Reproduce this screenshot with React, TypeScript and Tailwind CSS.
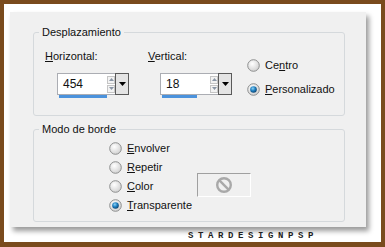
import React from "react"

const font = { fontFamily: '"Liberation Sans", Arial, sans-serif' }

function Radio({ checked, label, u }: { checked?: boolean; label: string; u: number }) {
  return (
    <div className="flex items-center h-[16px] gap-[5px]">
      <svg width="13" height="13" viewBox="0 0 13 13" className="shrink-0">
        <defs>
          <radialGradient id={checked ? "rgOn" : "rgOff"} cx="0.4" cy="0.35" r="0.7">
            <stop offset="0" stopColor="#ffffff" />
            <stop offset="1" stopColor="#cfcfcf" />
          </radialGradient>
          <radialGradient id="dot" cx="0.4" cy="0.35" r="0.7">
            <stop offset="0" stopColor="#8fd3f5" />
            <stop offset="0.5" stopColor="#1d7fc1" />
            <stop offset="1" stopColor="#0c3d66" />
          </radialGradient>
        </defs>
        <circle cx="6.5" cy="6.5" r="5.8" fill={checked ? "url(#rgOn)" : "url(#rgOff)"} stroke="#8e8f8f" strokeWidth="1" />
        {checked && <circle cx="6.5" cy="6.5" r="3.3" fill="url(#dot)" />}
      </svg>
      <span className="text-[11px] leading-[13px] text-[#111]">
        {label.slice(0, u)}
        <span className="underline underline-offset-[1px]">{label[u]}</span>
        {label.slice(u + 1)}
      </span>
    </div>
  )
}

function Spinner({ value, bar }: { value: string; bar: number }) {
  return (
    <div className="flex flex-col w-[72px]">
      <div className="flex h-[22px]">
        <div className="flex items-center w-[50px] bg-white border border-[#abadb3] border-r-0 pl-[5px] text-[12px] text-[#111]">
          {value}
        </div>
        <div className="flex flex-col justify-center gap-[1px] w-[8px] bg-white border-y border-[#abadb3]">
          <div className="flex items-center justify-center h-[8px] bg-[#f3f3f3] border border-[#c5c5c5]">
            <svg width="5" height="3" viewBox="0 0 5 3"><path d="M0 3 L2.5 0 L5 3 Z" fill="#8a96a6" /></svg>
          </div>
          <div className="flex items-center justify-center h-[8px] bg-[#f3f3f3] border border-[#c5c5c5]">
            <svg width="5" height="3" viewBox="0 0 5 3"><path d="M0 0 L2.5 3 L5 0 Z" fill="#8a96a6" /></svg>
          </div>
        </div>
        <div className="flex items-center justify-center w-[14px] bg-[#e4e4e4] border border-[#5a5a5a]">
          <svg width="7" height="4" viewBox="0 0 7 4"><path d="M0 0 L3.5 4 L7 0 Z" fill="#000" /></svg>
        </div>
      </div>
      <div className="h-[3px] w-[50px] pl-[2px]">
        <div className="h-[3px] bg-[#4b92dc]" style={{ width: bar }} />
      </div>
    </div>
  )
}

export default function App() {
  return (
    <div className="w-[385px] h-[247px] bg-[#7a4b1d] pt-[4px] px-[4px] pb-[5px]" style={font}>
      <div className="h-full bg-white pt-[8px] pl-[6px]">
        <div className="w-[356px] h-[215px] bg-[#f0f0f0] pl-[23px] pt-[13px] shadow-[3px_4px_5px_rgba(0,0,0,0.4)]">
          {/* Desplazamiento */}
          <fieldset className="w-[312px] h-[91px] border border-[#d5d9dc] rounded-[3px]">
            <legend className="ml-[5px] px-[3px] text-[11px] leading-[14px] text-[#111]">Desplazamiento</legend>
            <div className="flex pl-[11px] pt-[11px]">
              <div className="flex flex-col w-[103px]">
                <span className="text-[11px] leading-[13px] text-[#111]">
                  <span className="underline underline-offset-[1px]">H</span>orizontal:
                </span>
                <div className="ml-[12px] mt-[10px]">
                  <Spinner value="454" bar={48} />
                </div>
              </div>
              <div className="flex flex-col w-[99px]">
                <span className="text-[11px] leading-[13px] text-[#111]">
                  <span className="underline underline-offset-[1px]">V</span>ertical:
                </span>
                <div className="ml-[12px] mt-[10px]">
                  <Spinner value="18" bar={35} />
                </div>
              </div>
              <div className="flex flex-col gap-[8px] mt-[7px]">
                <Radio label="Centro" u={2} />
                <Radio label="Personalizado" u={0} checked />
              </div>
            </div>
          </fieldset>

          {/* Modo de borde */}
          <fieldset className="mt-[6px] w-[312px] h-[100px] border border-[#d5d9dc] rounded-[3px]">
            <legend className="ml-[5px] px-[3px] text-[11px] leading-[14px] text-[#111]">Modo de borde</legend>
            <div className="flex pl-[75px] pt-[4px]">
              <div className="flex flex-col gap-[3px] w-[88px]">
                <Radio label="Envolver" u={0} />
                <Radio label="Repetir" u={0} />
                <Radio label="Color" u={0} />
                <Radio label="Transparente" u={0} checked />
              </div>
              <div className="mt-[33px] flex items-center justify-center w-[54px] h-[24px] border border-t-[#a0a0a0] border-l-[#a0a0a0] border-r-white border-b-white">
                <svg width="18" height="18" viewBox="0 0 18 18">
                  <circle cx="9" cy="9" r="6.8" fill="none" stroke="#a9a9a9" strokeWidth="2.4" />
                  <line x1="4.4" y1="4.4" x2="13.6" y2="13.6" stroke="#a9a9a9" strokeWidth="2.4" />
                </svg>
              </div>
            </div>
          </fieldset>
        </div>
        <div
          className="mt-[5px] ml-[178px] text-[9px] leading-[8px] font-bold tracking-[4.6px] text-[#1e1e1e]"
          style={{ fontFamily: '"Liberation Mono", monospace' }}
        >
          STARDESIGNPSP
        </div>
      </div>
    </div>
  )
}
